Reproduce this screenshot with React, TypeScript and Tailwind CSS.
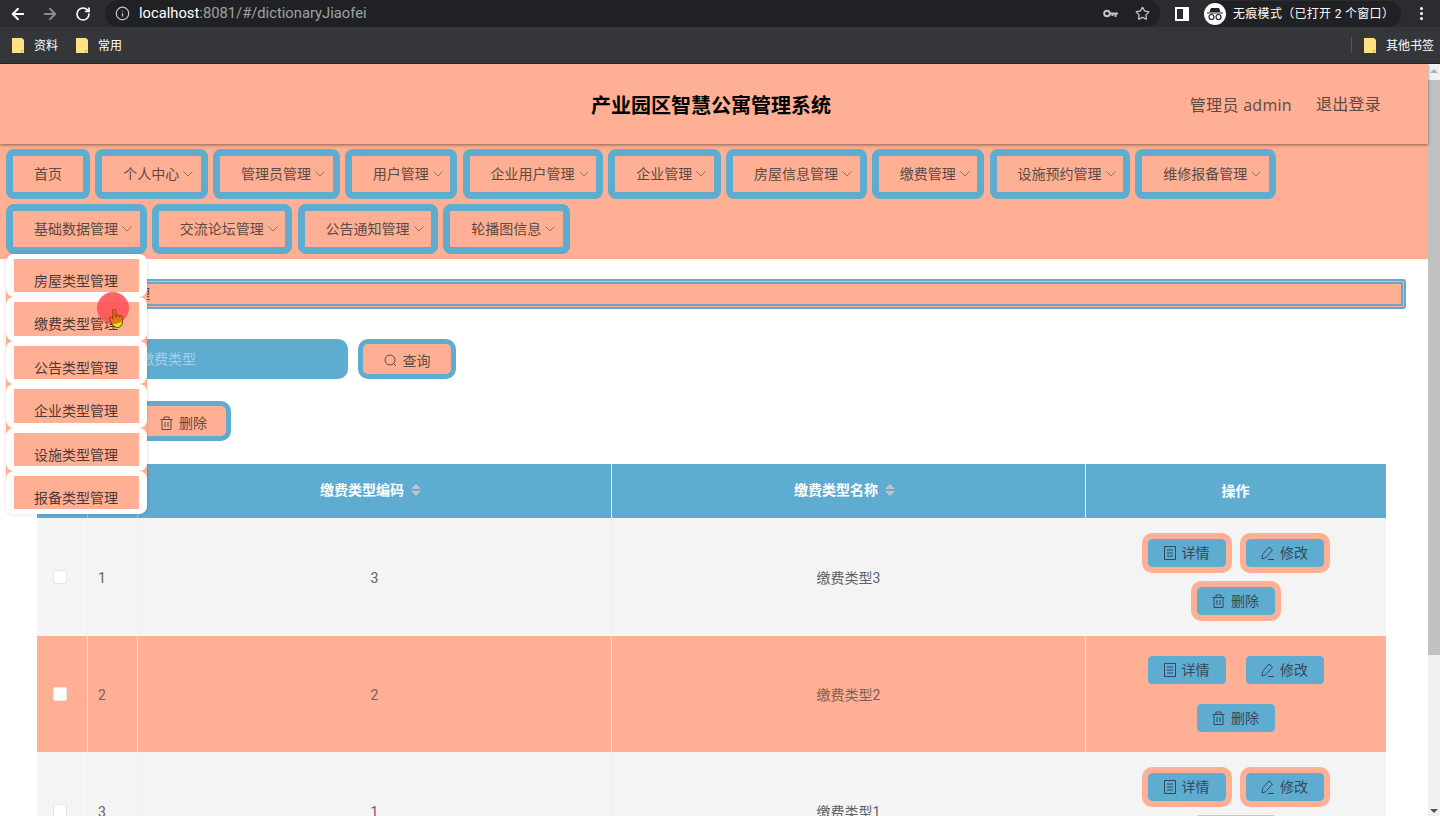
import { ArrowLeft, ArrowRight, RotateCw, Info, Star } from "lucide-react";

const font = "font-['Roboto','Noto_Sans_CJK_SC',sans-serif]";

function Folder() {
  return (
    <svg width="12" height="15" viewBox="0 0 12 15" className="shrink-0">
      <path d="M0 0h10l2 2v13H0z" fill="#fde27f" />
      <path d="M9 15v-3h3z" fill="#d9b650" />
    </svg>
  );
}

function Chevron() {
  return (
    <svg width="10" height="6" viewBox="0 0 10 6" className="ml-[4px] mr-[0.500px] shrink-0">
      <path d="M0.500 0.500 5 5l4.500-4.500" fill="none" stroke="#7d6a64" strokeWidth="0.900" />
    </svg>
  );
}

function SearchIcon() {
  return (
    <svg width="13" height="13" viewBox="0 0 13 13" fill="none" stroke="currentColor" strokeWidth="1">
      <circle cx="6" cy="6" r="5" />
      <path d="M9.600 9.600l2.400 2.400" />
    </svg>
  );
}

function TrashIcon() {
  return (
    <svg width="13" height="14" viewBox="0 0 13 14" fill="none" stroke="currentColor" strokeWidth="1">
      <path d="M0.500 3.500h12M4 3.500V1h5v2.500M2 3.500v10h9v-10M5 6v5M8 6v5" />
    </svg>
  );
}

function TicketIcon() {
  return (
    <svg width="12" height="14" viewBox="0 0 12 14" fill="none" stroke="currentColor" strokeWidth="1">
      <path d="M0.500 0.500h11v13H0.500zM3 4h6M3 7h6M3 10h6" />
    </svg>
  );
}

function PenIcon() {
  return (
    <svg width="13" height="14" viewBox="0 0 13 14" fill="none" stroke="currentColor" strokeWidth="1">
      <path d="M1 13l.5-4.500L8 1l3.500 3L5 11.500zM7 13.500h6" />
    </svg>
  );
}

function NavBtn({ label, arrow = true }: { label: string; arrow?: boolean }) {
  return (
    <div className={`flex h-[50px] items-center rounded-lg border-[7px] border-[#5facd1] pl-[21px] text-sm text-[#5d4a44] ${arrow ? "pr-[7px]" : "pr-[21px]"}`}>
      <span>{label}</span>
      {arrow && <Chevron />}
    </div>
  );
}

function ToolBtn({ icon, label, className = "" }: { icon: React.ReactNode; label: string; className?: string }) {
  return (
    <div className={`flex h-10 items-center justify-center gap-[6px] rounded-[10px] border-[5px] border-[#5facd1] bg-[#ffb094] pt-[3px] text-sm text-[#5d4a44] ${className}`}>
      {icon}
      <span>{label}</span>
    </div>
  );
}

function ActBtn({ icon, label }: { icon: React.ReactNode; label: string }) {
  return (
    <div className="flex h-10 w-[90px] items-center justify-center gap-[6px] rounded-[10px] border-[6px] border-[#ffaf93] bg-[#5facd1] bg-clip-padding text-sm text-[#34495a]">
      {icon}
      <span>{label}</span>
    </div>
  );
}

function Row({ n, code, name, hot, h }: { n: string; code: string; name: string; hot?: boolean; h: string }) {
  const line = hot ? "border-[#ffe3d9]" : "border-[#f0f0f2]";
  const text = hot ? "text-[#7b6058]" : "text-[#606266]";
  return (
    <div className={`grid grid-cols-[51px_50px_474px_474px_300px] text-sm ${hot ? "bg-[#ffaf93]" : "bg-[#f4f4f5]"} ${text} ${h}`}>
      <div className={`flex items-center border-r pl-4 ${line}`}>
        <span className="h-[14px] w-[14px] rounded-[2px] border border-[#e6e6e6] bg-white" />
      </div>
      <div className={`flex items-center border-r pl-[10px] pt-[2px] ${line}`}>{n}</div>
      <div className={`flex items-center justify-center border-r pt-[2px] ${line}`}>{code}</div>
      <div className={`flex items-center justify-center border-r pt-[2px] ${line}`}>{name}</div>
      <div className="flex flex-col items-center justify-center gap-2 pr-px">
        <div className="flex gap-2">
          <ActBtn icon={<TicketIcon />} label="详情" />
          <ActBtn icon={<PenIcon />} label="修改" />
        </div>
        <ActBtn icon={<TrashIcon />} label="删除" />
      </div>
    </div>
  );
}

function Sort() {
  return (
    <span className="ml-[7px] flex flex-col gap-[2px]">
      <span className="h-0 w-0 border-x-[5px] border-b-[5px] border-x-transparent border-b-[#c0c4cc]" />
      <span className="h-0 w-0 border-x-[5px] border-t-[5px] border-x-transparent border-t-[#c0c4cc]" />
    </span>
  );
}

const handPath = "M4 1.500a1.300 1.300 0 0 1 2.600 0V8h1V7a1.200 1.200 0 0 1 2.400 0v1h1a1.200 1.200 0 0 1 2.400 .5V13c0 3-2 5.500-5 5.500S3 16 2 13l-1.500-3c-.5-1.500 1-2.500 2-1.500L4 10z";

const row1 = ["个人中心", "管理员管理", "用户管理", "企业用户管理", "企业管理", "房屋信息管理", "缴费管理", "设施预约管理", "维修报备管理"];
const row2 = ["基础数据管理", "交流论坛管理", "公告通知管理", "轮播图信息"];
const menu = ["房屋类型管理", "缴费类型管理", "公告类型管理", "企业类型管理", "设施类型管理", "报备类型管理"];

export default function App() {
  return (
    <div className={`relative h-[816px] w-[1440px] overflow-hidden bg-white ${font}`}>
      {/* browser chrome */}
      <div className="flex h-[27px] items-center bg-[#2b2c2f] text-white">
        <ArrowLeft size={18} strokeWidth={2.5} className="ml-[9px]" />
        <ArrowRight size={18} strokeWidth={2.5} className="ml-[14px] text-[#8a8b8d]" />
        <RotateCw size={16} strokeWidth={2.5} className="ml-[16px]" />
        <div className="ml-[14px] flex h-[27px] w-[1055px] items-center rounded-[14px] bg-[#202124] pl-[10px]">
          <Info size={15} className="text-[#c4c5c7]" />
          <span className="ml-[9px] text-[14.750px] text-white">localhost</span>
          <span className="text-[14.750px] text-[#a0a1a3]">:8081/#/dictionaryJiaofei</span>
          <div className="ml-auto flex items-center gap-[17px] pr-[10px]">
            <svg width="15" height="9" viewBox="0 0 15 9" fill="none">
              <circle cx="4" cy="4.500" r="2.800" stroke="#c4c5c7" strokeWidth="2" />
              <path d="M6.500 3.500H15v2h-1.500V8h-2V5.500h-1V7h-2V5.500H6.500z" fill="#c4c5c7" />
            </svg>
            <Star size={15} className="text-[#c4c5c7]" />
          </div>
        </div>
        <span className="ml-[15px] h-[14px] w-[14px] border-2 border-white border-r-[6px]" />
        <div className="ml-[15px] flex h-[26px] w-[197px] items-center rounded-full bg-[#202124]">
          <span className="flex h-[22px] w-[22px] items-center justify-center rounded-full bg-white">
            <svg width="16" height="14" viewBox="0 0 16 14" fill="#202124">
              <path d="M4 1h8l1.500 4h-11zM0 5.500h16v1H0z" />
              <circle cx="4.500" cy="10" r="2.500" fill="none" stroke="#202124" strokeWidth="1.200" />
              <circle cx="11.500" cy="10" r="2.500" fill="none" stroke="#202124" strokeWidth="1.200" />
            </svg>
          </span>
          <span className="ml-[7px] whitespace-nowrap text-xs tracking-[0.300px] text-white">无痕模式（已打开 2 个窗口）</span>
        </div>
        <div className="ml-[19px] flex flex-col gap-[2px]">
          <span className="h-[3px] w-[3px] rounded-full bg-white" />
          <span className="h-[3px] w-[3px] rounded-full bg-white" />
          <span className="h-[3px] w-[3px] rounded-full bg-white" />
        </div>
      </div>
      <div className="flex h-[37px] items-center border-b border-[#232427] bg-[#35363a] pl-3 text-xs text-white">
        <Folder />
        <span className="ml-[10px] mt-[2px]">资料</span>
        <span className="ml-[18px]"><Folder /></span>
        <span className="ml-[10px] mt-[2px]">常用</span>
        <span className="ml-auto h-[16px] w-px bg-[#55565a]" />
        <span className="ml-[12px]"><Folder /></span>
        <span className="ml-[10px] mr-[6px] mt-[2px] whitespace-nowrap">其他书签</span>
      </div>

      <div className="flex h-[752px]">
        <main className="w-[1428px]">
          <header className="relative z-10 flex h-20 items-center bg-[#ffaf93] pr-[47px] shadow-[0_1px_3px_rgba(60,40,30,0.6)]">
            <h1 className="ml-[591px] mt-[3px] text-xl font-bold text-black">产业园区智慧公寓管理系统</h1>
            <span className="ml-auto mt-[2px] font-['Open_Sans','Noto_Sans_CJK_SC',sans-serif] text-base tracking-[0.300px] text-[#5d4a44]">管理员 admin</span>
            <span className="ml-[24px] mt-[2px] text-base tracking-[0.250px] text-[#5d4a44]">退出登录</span>
          </header>
          <nav className="flex flex-col gap-[5px] bg-[#ffaf93] px-[6px] py-[5px]">
            <div className="flex gap-[5.250px]">
              <NavBtn label="首页" arrow={false} />
              {row1.map((l) => <NavBtn key={l} label={l} />)}
            </div>
            <div className="flex gap-[5.250px]">
              {row2.map((l) => <NavBtn key={l} label={l} />)}
            </div>
          </nav>
          <div className="pl-[37px] pt-5">
            <div className="flex h-[30px] w-[1369px] items-center rounded-[3px] border-[5px] border-double border-[#6ba6c6] bg-[#ffaf93] pl-[24px] text-sm text-[#5d4a44]">缴费类型管理</div>
            <div className="mt-[30px] flex items-center gap-[10px]">
              <div className="flex h-10 w-[311px] items-center rounded-[10px] bg-[#5facd1] pl-[103px] text-sm text-[#a9cfe3]">缴费类型</div>
              <ToolBtn className="w-[98px]" icon={<SearchIcon />} label="查询" />
            </div>
            <div className="mt-[22px] flex gap-[7px]">
              <ToolBtn className="w-[92px]" icon={<TrashIcon />} label="新增" />
              <ToolBtn className="w-[95px]" icon={<TrashIcon />} label="删除" />
            </div>
            <div className="mt-[23px] w-[1349px]">
              <div className="grid h-[54px] grid-cols-[51px_50px_474px_474px_300px] bg-[#5facd1] text-sm font-bold text-white">
                <div className="border-r border-[#8fc5df]" />
                <div className="border-r border-[#8fc5df]" />
                <div className="flex items-center justify-center border-r border-[#e8f3f8] pb-[2px] pr-2">缴费类型编码<Sort /></div>
                <div className="flex items-center justify-center border-r border-[#e8f3f8] pb-[2px] pr-2">缴费类型名称<Sort /></div>
                <div className="flex items-center justify-center pr-px">操作</div>
              </div>
              <Row n="1" code="3" name="缴费类型3" h="h-[118px]" />
              <Row n="2" code="2" name="缴费类型2" hot h="h-[116px]" />
              <Row n="3" code="1" name="缴费类型1" h="h-[118px]" />
            </div>
          </div>
        </main>
        <aside className="flex w-3 flex-col bg-[#f1f1f1]">
          <span className="mx-auto mt-[5px] h-0 w-0 border-x-[4px] border-b-[4px] border-x-transparent border-b-[#b0b0b0]" />
          <span className="mt-[7px] h-[575px] w-full bg-[#c1c1c1]" />
          <span className="mx-auto mb-[3px] mt-auto h-0 w-0 border-x-[4px] border-t-[4px] border-x-transparent border-t-[#505050]" />
        </aside>
      </div>

      {/* open dropdown */}
      <ul className="absolute left-[6px] top-[254px] z-20 w-[141px] rounded-lg text-sm text-[#4d3a34] shadow-[0_0_4px_rgba(0,0,0,0.15)]">
        {menu.map((m, i) => (
          <li key={m} className="relative h-[43.400px]">
            {i > 0 && (
              <>
                <span className="absolute -top-[8px] left-0 z-0 h-4 w-2 bg-[#ffb094]" />
                <span className="absolute -top-[8px] right-0 z-0 h-4 w-2 bg-[#ffb094]" />
              </>
            )}
            <div className="relative z-10 h-full rounded-lg bg-white px-2 py-[5px]">
              <div className="h-[33.400px] bg-[#ffb094] pl-5 pt-[13px] leading-[18px]">{m}</div>
            </div>
          </li>
        ))}
      </ul>

      {/* pointer overlay */}
      <span className="absolute left-[97px] top-[292px] z-30 h-8 w-8 rounded-full bg-[#ff5454]/90" />
      <svg width="16" height="21" viewBox="0 0 16 21" className="absolute left-[109px] top-[309px] z-30">
        <defs>
          <clipPath id="hand-in-circle">
            <circle cx="4" cy="-1" r="16" />
          </clipPath>
        </defs>
        <path d={handPath} fill="#d4f000" stroke="#3a2a10" strokeWidth="0.800" />
        <path d={handPath} fill="#e8701a" stroke="#a04010" strokeWidth="0.800" clipPath="url(#hand-in-circle)" />
      </svg>
    </div>
  );
}
